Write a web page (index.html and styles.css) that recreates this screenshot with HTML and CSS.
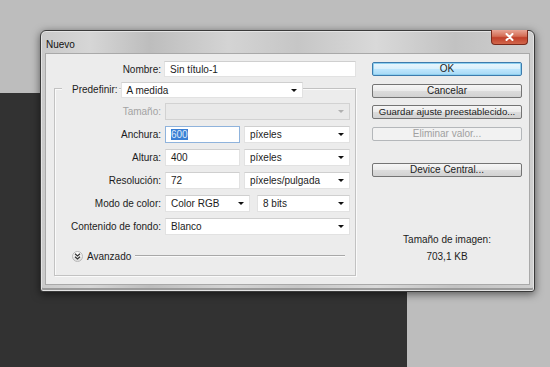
FILE: index.html
```html
<!DOCTYPE html>
<html lang="es">

<head>
  <meta charset="UTF-8" />
  <meta name="viewport" content="width=device-width, initial-scale=1.0" />
  <title>Nuevo</title>
  <link rel="stylesheet" href="styles.css">
</head>

<body>
  <div class="desktop">
    <div class="doc-canvas"></div>

    <div class="dialog">
      <div class="titlebar">
        <span class="title">Nuevo</span>
        <div class="close">
          <svg width="9" height="8" viewBox="0 0 9 8">
            <path d="M1.5 1 L7.5 7 M7.5 1 L1.5 7" stroke="#fff" stroke-width="2" stroke-linecap="round" />
          </svg>
        </div>
      </div>

      <div class="client">
        <div class="form">
          <div class="row name-row">
            <label class="lbl">Nombre:</label>
            <div class="field w-name">Sin título-1</div>
          </div>

          <div class="group">
            <div class="legend">
              <label class="legend-lbl">Predefinir:</label>
              <div class="field select w-preset">A medida<span class="arrow"></span></div>
            </div>

            <div class="row">
              <label class="lbl disabled">Tamaño:</label>
              <div class="field select off w-full"><span class="arrow"></span></div>
            </div>
            <div class="row">
              <label class="lbl">Anchura:</label>
              <div class="field focus w-num"><span class="sel">600</span></div>
              <div class="field select w-unit">píxeles<span class="arrow"></span></div>
            </div>
            <div class="row">
              <label class="lbl">Altura:</label>
              <div class="field w-num">400</div>
              <div class="field select w-unit">píxeles<span class="arrow"></span></div>
            </div>
            <div class="row">
              <label class="lbl">Resolución:</label>
              <div class="field w-num">72</div>
              <div class="field select w-unit">píxeles/pulgada<span class="arrow"></span></div>
            </div>
            <div class="row">
              <label class="lbl">Modo de color:</label>
              <div class="field select w-mode">Color RGB<span class="arrow"></span></div>
              <div class="field select w-bits">8 bits<span class="arrow"></span></div>
            </div>
            <div class="row">
              <label class="lbl">Contenido de fondo:</label>
              <div class="field select w-full">Blanco<span class="arrow"></span></div>
            </div>

            <div class="advanced">
              <span class="toggle">
                <svg width="7" height="7" viewBox="0 0 7 7">
                  <path d="M1 0.8 L3.5 3 L6 0.8 M1 3.8 L3.5 6 L6 3.8" stroke="#333" stroke-width="1.2" fill="none" />
                </svg>
              </span>
              <span class="adv-text">Avanzado</span>
              <span class="adv-line"></span>
            </div>
          </div>
        </div>

        <div class="buttons">
          <button class="btn default b-ok">OK</button>
          <button class="btn b-cancel">Cancelar</button>
          <button class="btn b-save">Guardar ajuste preestablecido...</button>
          <button class="btn off b-del">Eliminar valor...</button>
          <button class="btn b-device">Device Central...</button>

          <div class="size-info">
            <div>Tamaño de imagen:</div>
            <div class="size-val">703,1 KB</div>
          </div>
        </div>
      </div>
    </div>
  </div>
</body>

</html>
```

FILE: styles.css
```css
body {
  margin: 0;
  width: 550px;
  height: 367px;
  overflow: hidden;
  background-color: #bdbdbd;
  font-family: "Liberation Sans", Arial, sans-serif;
  font-size: 10px;
  color: #1c1c1c;
}

.desktop {
  position: relative;
  width: 550px;
  height: 367px;
}

.doc-canvas {
  position: absolute;
  left: 0;
  top: 93px;
  width: 407px;
  height: 274px;
  background-color: #323232;
}

/* window frame */
.dialog {
  position: absolute;
  left: 40px;
  top: 30px;
  width: 495px;
  height: 262px;
  box-sizing: border-box;
  border: 1px solid #3a3a3a;
  border-radius: 6px 6px 3px 3px;
  padding: 0 4px 6px 4px;
  background: linear-gradient(90deg, #cacaca 0%, #d6d6d6 10%, #bdbdbd 22%, #d4d4d4 38%, #c6c6c6 52%, #d9d9d9 68%, #c2c2c2 84%, #cfcfcf 100%);
  box-shadow: 0 2px 8px rgba(0, 0, 0, 0.55), inset 0 0 0 1px #e4e4e4, inset 0 -2px 0 1px #9a9a9a;
  display: flex;
  flex-direction: column;
}

.titlebar {
  height: 22px;
  display: flex;
  align-items: flex-start;
  justify-content: space-between;
}

.title {
  margin-top: 8px;
  margin-left: 1px;
  font-size: 10px;
  color: #111;
}

.close {
  width: 35px;
  height: 14px;
  margin-top: -1px;
  margin-right: 2px;
  border: 1px solid #7a2a1c;
  border-top: none;
  border-radius: 0 0 4px 4px;
  background: linear-gradient(180deg, #e8a595 0%, #d46d55 45%, #c0402a 55%, #d2674c 100%);
  display: flex;
  align-items: center;
  justify-content: center;
}

.client {
  flex: 1;
  display: flex;
  background-color: #ececec;
  border: 1px solid #a9a9a9;
}

/* left side */
.form {
  width: 312px;
  padding-top: 7px;
}

.row {
  display: flex;
  align-items: center;
  gap: 4px;
  height: 17px;
  margin-bottom: 6px;
}

.name-row {
  gap: 3px;
  height: 16px;
  margin-bottom: 0;
}

.lbl {
  text-align: right;
  flex: none;
}

.name-row .lbl {
  width: 115px;
}

.disabled {
  color: #a3a3a3;
}

.field {
  position: relative;
  box-sizing: border-box;
  height: 100%;
  background-color: #fff;
  border: 1px solid #e2e2e2;
  border-top-color: #cfcfcf;
  padding-left: 5px;
  line-height: 15px;
  white-space: nowrap;
}

.select .arrow {
  position: absolute;
  right: 5px;
  top: 6px;
  border-left: 3px solid transparent;
  border-right: 3px solid transparent;
  border-top: 3px solid #111;
}

.off {
  background-color: #e9e9e9;
  border-color: #d2d2d2;
}

.off .arrow {
  border-top-color: #b0b0b0;
}

.focus {
  border-color: #8fb3dc;
}

.sel {
  background-color: #3a7fd5;
  color: #dde9f8;
}

.w-name { width: 192px; }
.w-preset { width: 182px; height: 16px; }
.w-full { width: 185px; }
.w-num { width: 75px; }
.w-unit { width: 106px; }
.w-mode { width: 85px; margin-right: 3px; }
.w-bits { width: 93px; }

.group {
  margin-left: 8px;
  margin-top: 11px;
  width: 302px;
  height: 188px;
  box-sizing: border-box;
  border: 1px solid #c2c2c2;
  box-shadow: inset 1px 1px 0 #fafafa, 1px 1px 0 #fafafa;
}

.group .lbl {
  width: 106px;
}

.legend {
  display: flex;
  align-items: center;
  gap: 2px;
  margin-top: -7px;
  margin-left: 7px;
  height: 16px;
}

.legend-lbl {
  background-color: #ececec;
  padding: 0 1px 0 10px;
  line-height: 16px;
}

.legend + .row {
  margin-top: 5px;
}

.advanced {
  display: flex;
  align-items: center;
  margin-top: 15px;
  padding-left: 17px;
  height: 12px;
}

.toggle {
  width: 11px;
  height: 11px;
  box-sizing: border-box;
  border-radius: 50%;
  border: 1px solid #b8b8b8;
  background: linear-gradient(180deg, #ffffff, #dcdcdc);
  display: flex;
  align-items: center;
  justify-content: center;
}

.adv-text {
  margin-left: 4px;
}

.adv-line {
  width: 210px;
  margin-left: 4px;
  border-top: 1px solid #a8a8a8;
  border-bottom: 1px solid #fafafa;
}

/* right side */
.buttons {
  width: 150px;
  margin-left: 14px;
  padding-top: 8px;
  display: flex;
  flex-direction: column;
}

.btn {
  height: 14px;
  box-sizing: border-box;
  padding: 0;
  border: 1px solid #747474;
  border-radius: 2px;
  background: linear-gradient(180deg, #f6f6f6 0%, #ebebeb 48%, #dcdcdc 52%, #d2d2d2 100%);
  font-family: "Liberation Sans", Arial, sans-serif;
  font-size: 10px;
  line-height: 12px;
  color: #1c1c1c;
}

.b-save {
  font-size: 9.6px;
}

.default {
  border-color: #3d7bad;
  background: linear-gradient(180deg, #eaf6fd 0%, #d9f0fc 48%, #bee6fd 52%, #a7d9f5 100%);
  box-shadow: inset 0 0 0 1px #8ed0f0;
}

.b-cancel { margin-top: 8px; }
.b-save { margin-top: 7px; }
.b-del { margin-top: 8px; }
.b-device { margin-top: 22px; }

.btn.off {
  border-color: #b4b7ba;
  background: #f2f2f2;
  color: #a0a0a0;
}

.size-info {
  margin-top: 54px;
  text-align: center;
  line-height: 17px;
}
```
